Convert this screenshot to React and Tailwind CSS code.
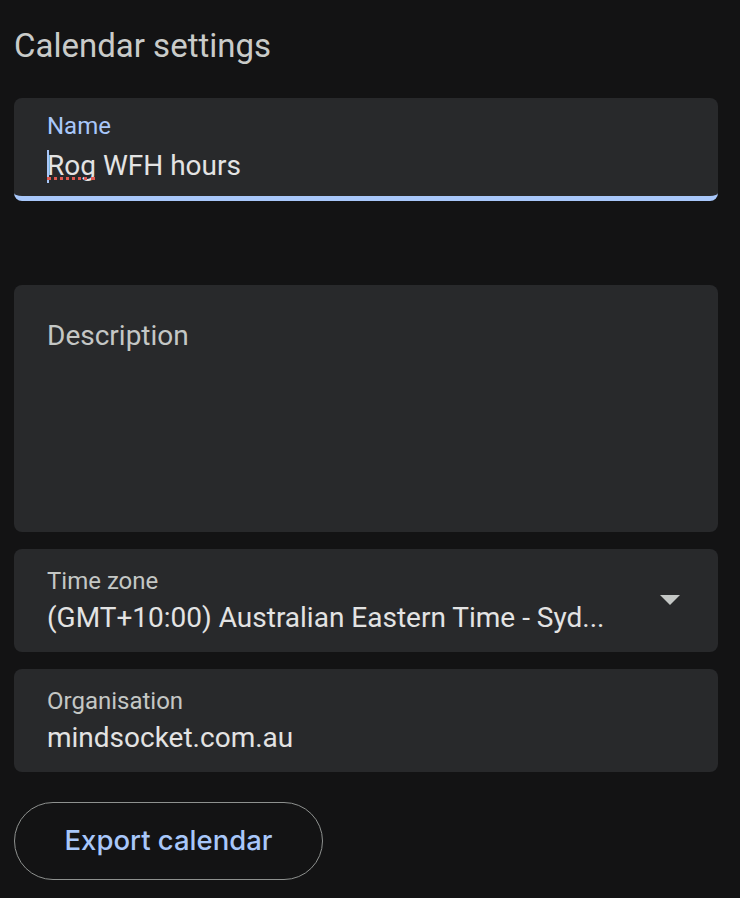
import React from 'react';

const Field = ({ label, value, children }) => (
  <div className="relative h-[103px] rounded-[8px] bg-[#28292b] pl-[33px] pr-[30px] pt-[18px]">
    <div className="text-[24px] leading-[28px] text-[#c4c7c5]">{label}</div>
    <div className="mt-[6px] truncate text-[28px] leading-[34px] text-[#e3e3e3]">{value}</div>
    {children}
  </div>
);

const App = () => {
  return (
    <div
      className="min-h-[898px] bg-[#131314] pl-[14px] pr-[22px] pt-[26px]"
      style={{ fontFamily: 'Roboto, "Liberation Sans", sans-serif' }}
    >
      <h1 className="text-[33px] leading-[40px] font-normal text-[#c9cbc9]">
        Calendar settings
      </h1>

      <div className="mt-[32px] h-[103px] overflow-hidden rounded-[8px] bg-[#28292b] pl-[33px] pt-[14px] border-b-[5px] border-[#a8c7fa]">
        <div className="text-[24px] leading-[28px] text-[#a8c7fa]">Name</div>
        <div className="relative mt-[9px] flex text-[28px] leading-[34px] text-[#e3e3e3]">
          <span className="mr-[-2px] mt-[1px] h-[33px] w-[2px] bg-[#a8c7fa]" />
          <span className="relative">
            Rog
            <span className="absolute left-0 top-[28px] h-[3px] w-[48px] border-b-[3px] border-dotted border-[#e0594f]" />
          </span>
          <span>&nbsp;WFH hours</span>
        </div>
      </div>

      <div className="mt-[84px] h-[247px] rounded-[8px] bg-[#28292b] pl-[33px] pt-[34px]">
        <div className="text-[28px] leading-[34px] text-[#c4c7c5]">Description</div>
      </div>

      <div className="mt-[17px] flex flex-col gap-[17px]">
        <Field label="Time zone" value="(GMT+10:00) Australian Eastern Time - Syd...">
          <svg className="absolute right-[38px] top-[46px]" width="20" height="10" viewBox="0 0 20 10">
            <path d="M0 0 L20 0 L10 10 Z" fill="#c4c7c5" />
          </svg>
        </Field>
        <Field label="Organisation" value="mindsocket.com.au" />
      </div>

      <button
        className="mt-[30px] flex h-[78px] w-[309px] items-center justify-center rounded-full border border-[#8e918f] text-[27.5px] font-medium text-[#a8c7fa]"
        style={{ fontFamily: 'Inter, Roboto, sans-serif' }}
      >
        Export calendar
      </button>
    </div>
  );
};

export default App;
